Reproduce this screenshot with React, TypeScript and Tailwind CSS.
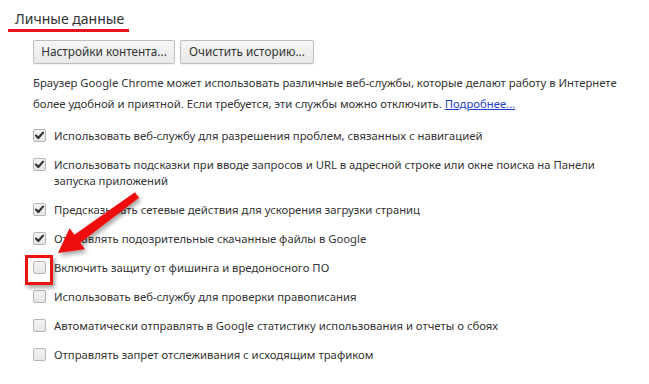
const rows = [
  { checked: true, text: 'Использовать веб-службу для разрешения проблем, связанных с навигацией' },
  {
    checked: true,
    text: 'Использовать подсказки при вводе запросов и URL в адресной строке или окне поиска на Панели запуска приложений',
  },
  { checked: true, text: 'Предсказывать сетевые действия для ускорения загрузки страниц' },
  { checked: true, text: 'Отправлять подозрительные скачанные файлы в Google' },
  { checked: false, text: 'Включить защиту от фишинга и вредоносного ПО' },
  { checked: false, text: 'Использовать веб-службу для проверки правописания' },
  { checked: false, text: 'Автоматически отправлять в Google статистику использования и отчеты о сбоях' },
  { checked: false, text: 'Отправлять запрет отслеживания с исходящим трафиком' },
];

function Checkbox({ checked }: { checked: boolean }) {
  return (
    <span className="mt-[1px] flex h-[13px] w-[13px] shrink-0 items-center justify-center rounded-[2px] border border-[#b5b5b5] bg-gradient-to-b from-[#f4f4f4] to-[#e6e6e6]">
      {checked && (
        <svg width="11" height="11" viewBox="0 0 11 11">
          <path d="M2 5.6 L4.3 8 L9 2.6" fill="none" stroke="#333" strokeWidth="2.2" strokeLinecap="round" strokeLinejoin="round" />
        </svg>
      )}
    </span>
  );
}

export default function App() {
  return (
    <div
      className="relative h-[384px] w-[649px] overflow-hidden bg-white text-[#333]"
      style={{ fontFamily: '"Noto Sans", "Open Sans", sans-serif' }}
    >
      {/* Section title with red underline */}
      <div className="ml-[8px] mt-[10px] w-[121px] whitespace-nowrap border-b-[3px] border-[#e8141b] pb-[1px] pl-[7px] text-[14px] leading-[18px]">
        Личные данные
      </div>

      <div className="pl-[33px] pr-[20px] text-[11.3px]">
        <div className="mt-[8px] flex gap-[5px]">
          <button className="h-[24px] w-[142px] rounded-[2px] border border-[#bdbdbd] bg-gradient-to-b from-[#f6f6f6] to-[#e9e9e9] text-[11.8px] text-[#333] shadow-[0_1px_0_rgba(0,0,0,0.06)]">
            Настройки контента...
          </button>
          <button className="h-[24px] w-[134px] rounded-[2px] border border-[#bdbdbd] bg-gradient-to-b from-[#f6f6f6] to-[#e9e9e9] text-[11.8px] text-[#333] shadow-[0_1px_0_rgba(0,0,0,0.06)]">
            Очистить историю...
          </button>
        </div>

        <p className="mt-[8px] max-w-[600px] leading-[21px]">
          Браузер Google Chrome может использовать различные веб-службы, которые делают работу в Интернете более
          удобной и приятной. Если требуется, эти службы можно отключить.{' '}
          <a className="text-[#1e3fcc] underline">Подробнее...</a>
        </p>

        <div className="mt-[14px] flex flex-col gap-[13px]">
          {rows.map((row) => (
            <div key={row.text} className="flex items-start gap-[8px] leading-[16px]">
              <Checkbox checked={row.checked} />
              <span className="max-w-[548px]">{row.text}</span>
            </div>
          ))}
        </div>
      </div>

      {/* Annotation: red box + arrow */}
      <div className="absolute left-[25px] top-[255px] h-[30px] w-[28px] border-[3px] border-[#ee1111] shadow-[2px_3px_4px_rgba(0,0,0,0.35)]" />
      <svg className="absolute left-0 top-0" width="649" height="384" viewBox="0 0 649 384">
        <defs>
          <filter id="sh" x="-20%" y="-20%" width="140%" height="140%">
            <feDropShadow dx="2" dy="3" stdDeviation="2" floodColor="#000" floodOpacity="0.35" />
          </filter>
        </defs>
        <polygon
          filter="url(#sh)"
          fill="#ee1111"
          strokeLinejoin="round"
          points="134.9,192.2 74.3,234.8 69.6,228.3 58,253 85,249.3 80.3,242.8 139.1,197.8"
        />
      </svg>
    </div>
  );
}
